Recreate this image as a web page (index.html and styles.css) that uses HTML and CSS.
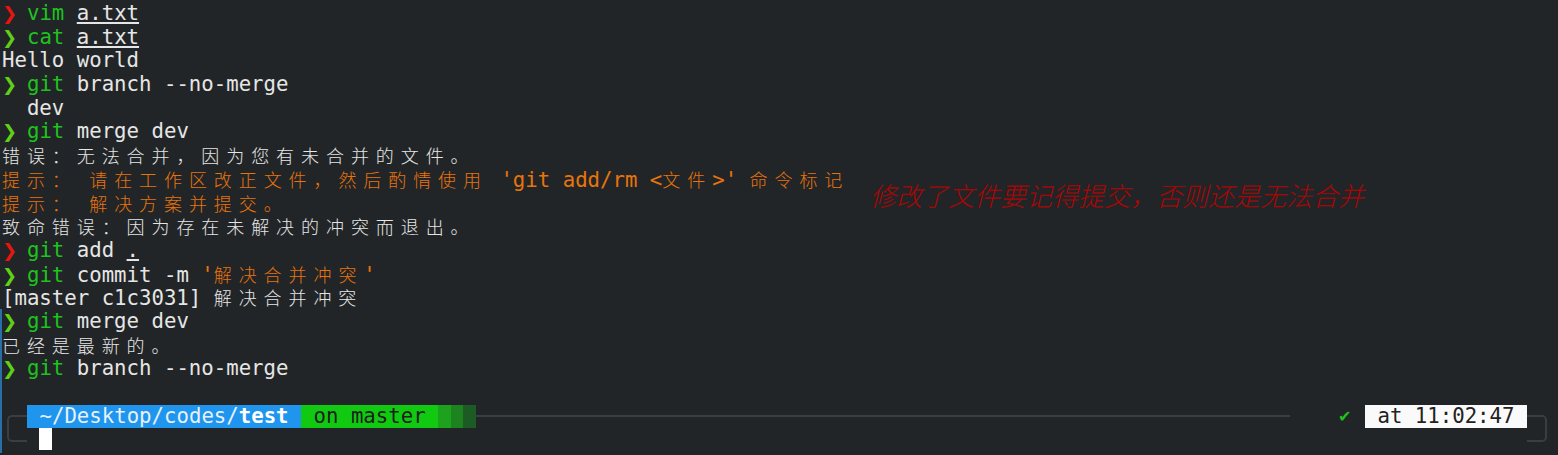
FILE: index.html
```html
<!DOCTYPE html>
<html lang="zh">
<head>
<meta charset="utf-8">
<title>Terminal</title>
<link rel="stylesheet" href="styles.css">
</head>
<body>
<div class="term">
  <div class="strip"></div>
  <div class="line"><span class="pr red">❯</span> <span class="c">vim</span> <span class="u">a.txt</span></div>
  <div class="line"><span class="pr grn">❯</span> <span class="c">cat</span> <span class="u">a.txt</span></div>
  <div class="line">Hello world</div>
  <div class="line"><span class="pr grn">❯</span> <span class="c">git</span> branch --no-merge</div>
  <div class="line">  dev</div>
  <div class="line"><span class="pr grn">❯</span> <span class="c">git</span> merge dev</div>
  <div class="line"><span class="z">错误：无法合并，因为您有未合并的文件。</span></div>
  <div class="line o"><span class="z">提示：</span> <span class="z">请在工作区改正文件，然后酌情使用</span> 'git add/rm &lt;<span class="z">文件</span>&gt;' <span class="z">命令标记</span></div>
  <div class="line o"><span class="z">提示：</span> <span class="z">解决方案并提交。</span></div>
  <div class="line"><span class="z">致命错误：因为存在未解决的冲突而退出。</span></div>
  <div class="line"><span class="pr red">❯</span> <span class="c">git</span> add <span class="u">.</span></div>
  <div class="line"><span class="pr grn">❯</span> <span class="c">git</span> commit -m <span class="o">'<span class="z">解决合并冲突</span>'</span></div>
  <div class="line">[master c1c3031] <span class="z">解决合并冲突</span></div>
  <div class="line"><span class="pr grn">❯</span> <span class="c">git</span> merge dev</div>
  <div class="line"><span class="z">已经是最新的。</span></div>
  <div class="line"><span class="pr grn">❯</span> <span class="c">git</span> branch --no-merge</div>
  <div class="line"></div>
  <div class="line prompt">
    <div class="frame-l"></div>
    <div class="seg seg-blue"> <span class="dir">~/Desktop/codes/</span><b>test</b> </div>
    <div class="seg seg-green"> on master </div>
    <div class="seg shade s1"></div>
    <div class="seg shade s2"></div>
    <div class="seg shade s3"></div>
    <div class="rule"></div>
    <div class="status"><span class="check">✔</span></div>
    <div class="seg seg-time"> at 11:02:47 </div>
    <div class="frame-r"></div>
  </div>
  <div class="line"><span class="cursor"></span></div>
  <div class="note">修改了文件要记得提交，否则还是无法合并</div>
</div>
</body>
</html>
```

FILE: styles.css
```css
html, body {
  margin: 0;
  padding: 0;
  background: #222527;
  overflow: hidden;
}

.term {
  position: relative;
  height: 455px;
  padding: 2px 0 0 2px;
  box-sizing: border-box;
  font-family: "DejaVu Sans Mono", "Liberation Mono", monospace;
  font-size: 20.7px;
  line-height: 23.7px;
  color: #e6e6e6;
}

.strip {
  position: absolute;
  left: 0;
  top: 309px;
  width: 2px;
  height: 144px;
  background: #2a6ea6;
}

.line {
  height: 23.7px;
  white-space: pre;
}

.pr {
  display: inline-block;
  width: 12.46px;
  font-family: "DejaVu Sans", sans-serif;
  font-weight: bold;
  font-size: 18px;
}
.red { color: #e8140e; }
.grn { color: #5fcf18; }
.c { color: #1ec21e; }
.u {
  text-decoration: underline;
  text-underline-offset: 2px;
}
.o { color: #e8740c; }

.z {
  font-family: "Noto Sans CJK SC", "Noto Sans CJK JP", sans-serif;
  font-weight: 300;
  font-size: 18px;
  letter-spacing: 6.92px;
  line-height: 23.7px;
}

/* prompt bar */
.prompt {
  display: flex;
  align-items: flex-start;
  margin-left: -2px;
  margin-top: -1px;
  padding-right: 11px;
}
.frame-l {
  flex: none;
  width: 18px;
  height: 23px;
  margin: 11px 0 0 7px;
  border: 2px solid #3b3e40;
  border-right: none;
  border-radius: 5px 0 0 5px;
}
.frame-r {
  flex: none;
  width: 18px;
  height: 23px;
  margin-top: 11px;
  border: 2px solid #3b3e40;
  border-left: none;
  border-radius: 0 5px 5px 0;
}
.seg {
  flex: none;
  height: 23px;
  margin-top: 1px;
  line-height: 23px;
  white-space: pre;
}
.seg-blue {
  width: 274.1px;
  background: #1f95ee;
  color: #e6f1fb;
}
.seg-blue b { color: #ffffff; }
.seg-green {
  width: 137.1px;
  background: #12c912;
  color: #1a1f1a;
}
.shade { width: 12.46px; }
.s1 { background: #1ca21c; }
.s2 { background: #1c831e; }
.s3 { background: #1d5b24; }
.rule {
  flex: 1;
  height: 2px;
  margin-top: 11px;
  background: #3b3e40;
}
.status {
  flex: none;
  width: 75px;
  height: 23.7px;
  padding-left: 48px;
  box-sizing: border-box;
}
.check {
  font-family: "DejaVu Sans", sans-serif;
  font-size: 16px;
  color: #1fbf1f;
}
.seg-time {
  width: 162px;
  background: #fafafa;
  color: #222222;
}

.cursor {
  display: inline-block;
  width: 12.5px;
  height: 22px;
  margin-left: 37.4px;
  margin-top: 0.4px;
  vertical-align: top;
  background: #ffffff;
}

.note {
  position: absolute;
  left: 870px;
  top: 178px;
  font-family: "Noto Sans CJK SC", sans-serif;
  font-weight: 300;
  font-style: italic;
  font-size: 26px;
  line-height: 34px;
  color: #a80606;
  white-space: nowrap;
}
```
